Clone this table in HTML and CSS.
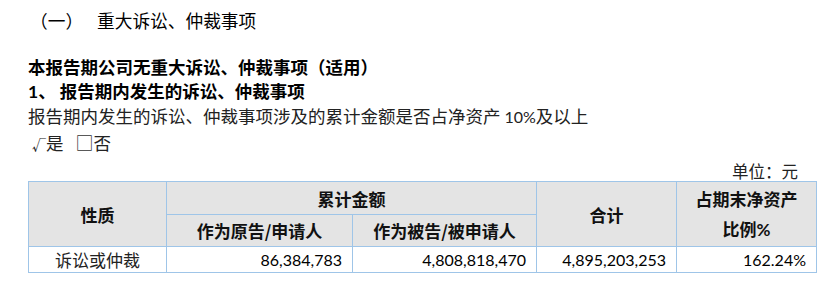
FILE: index.html
```html
<!DOCTYPE html>
<html lang="zh-CN">
<head>
<meta charset="utf-8">
<link rel="stylesheet" href="styles.css">
</head>
<body>
<div class="page">
  <div class="title"><span class="num">（一）</span><span>重大诉讼、仲裁事项</span></div>
  <div class="bold l1">本报告期公司无重大诉讼、仲裁事项（适用）</div>
  <div class="bold l2"><span class="lat">1</span>、 报告期内发生的诉讼、仲裁事项</div>
  <div class="plain l3">报告期内发生的诉讼、仲裁事项涉及的累计金额是否占净资产 <span class="lat pct">10%</span>及以上</div>
  <div class="plain l4"><span class="chk">√</span>是<span class="box">□</span>否</div>
  <div class="unit">单位：元</div>
  <table class="tbl">
    <colgroup>
      <col class="c1"><col class="c2"><col class="c3"><col class="c4"><col class="c5">
    </colgroup>
    <tr class="h1">
      <th rowspan="2">性质</th>
      <th colspan="2">累计金额</th>
      <th rowspan="2">合计</th>
      <th rowspan="2" class="ratio">占期末净资产<br>比例<span class="lat">%</span></th>
    </tr>
    <tr class="h2">
      <th>作为原告/申请人</th>
      <th>作为被告/被申请人</th>
    </tr>
    <tr class="d">
      <td class="name">诉讼或仲裁</td>
      <td class="n">86,384,783</td>
      <td class="n">4,808,818,470</td>
      <td class="n">4,895,203,253</td>
      <td class="n">162.24%</td>
    </tr>
  </table>
</div>
</body>
</html>
```

FILE: styles.css
```css
html, body {
  margin: 0;
  padding: 0;
  background: #fff;
}
body {
  font-family: "Noto Sans CJK SC", sans-serif;
  color: #000;
  font-size: 17px;
}
.page {
  padding: 8px 0 0 28px;
  width: 788px;
}
.title {
  height: 24px;
  line-height: 24px;
  font-size: 17.7px;
  padding-left: 2px;
  display: flex;
}
.title .num {
  width: 67px;
}
.bold {
  font-weight: bold;
  font-size: 17.5px;
  line-height: 24px;
}
.l1 {
  margin-top: 23px;
}
.plain {
  font-size: 17.5px;
  line-height: 24px;
  color: #222;
}
.pct {
  font-size: 16px;
}
.l4 {
  margin-top: 1px;
  padding-left: 4px;
}
.chk {
  font-size: 14px;
}
.box {
  font-size: 18px;
  margin-left: 12px;
  color: #333;
}
.lat {
  font-family: "Lato", "Noto Sans CJK SC", sans-serif;
}
.unit {
  text-align: right;
  padding-right: 18px;
  font-size: 16.5px;
  line-height: 24px;
  margin-top: 3px;
  color: #222;
}
.tbl {
  border-collapse: collapse;
  table-layout: fixed;
  width: 788px;
  margin-top: -2px;
}
.c1 { width: 138px; }
.c2 { width: 186px; }
.c3 { width: 184px; }
.c4 { width: 140px; }
.c5 { width: 140px; }
.tbl th, .tbl td {
  border: 1.5px solid #9fc5e8;
  padding: 0;
  font-size: 17px;
}
.tbl th {
  background: #e4e4e4;
  font-weight: bold;
  text-align: center;
  color: #111;
}
.h1 th { height: 32px; }
.h2 th { height: 31px; }
.ratio { line-height: 30px; }
.d td { height: 25px; }
.name {
  text-align: center;
  font-weight: normal;
  color: #222;
}
.n {
  text-align: right;
  padding-right: 10px !important;
  font-family: "Lato", sans-serif;
  font-size: 16px !important;
}
```
